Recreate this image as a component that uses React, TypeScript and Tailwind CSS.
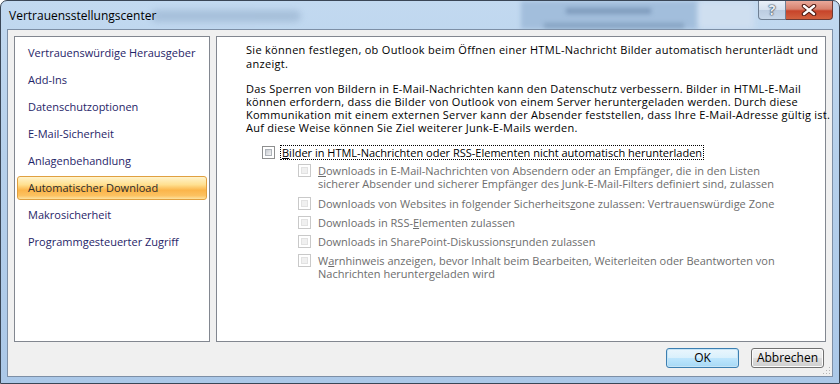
import React from "react";

const nav = [
  "Vertrauenswürdige Herausgeber",
  "Add-Ins",
  "Datenschutzoptionen",
  "E-Mail-Sicherheit",
  "Anlagenbehandlung",
  "Automatischer Download",
  "Makrosicherheit",
  "Programmgesteuerter Zugriff",
];

function U({ children }: { children: React.ReactNode }) {
  return <u className="inline-block leading-[13px] h-[13px]">{children}</u>;
}

function Box({ disabled }: { disabled?: boolean }) {
  return disabled ? (
    <div className="w-[13px] h-[13px] shrink-0 border border-[#c9c9c9] bg-white p-[2px]">
      <div className="w-full h-full border border-[#e2e2e2] bg-[#f0f0f0]" />
    </div>
  ) : (
    <div className="w-[13px] h-[13px] shrink-0 border border-[#8e8f8f] bg-white p-[2px]">
      <div className="w-full h-full border border-[#aeb3b9] bg-[linear-gradient(135deg,#c8ccd2,#f4f4f4)]" />
    </div>
  );
}

function Btn({ children, def }: { children: React.ReactNode; def?: boolean }) {
  return (
    <div
      className={
        "w-[73px] h-[20px] rounded-[3px] border flex items-center justify-center text-black " +
        (def
          ? "border-[#3c7fb1] bg-[linear-gradient(to_bottom,#eaf6fd_0%,#d9f0fc_50%,#bee6fd_51%,#a7d9f5_100%)] shadow-[inset_0_0_0_1px_#c6e4f6]"
          : "border-[#707070] bg-[linear-gradient(to_bottom,#f2f2f2_0%,#ebebeb_50%,#dddddd_51%,#cfcfcf_100%)] shadow-[inset_0_0_0_1px_#fcfcfc]")
      }
    >
      {children}
    </div>
  );
}

export default function App() {
  return (
    <div className="w-[840px] h-[384px] relative overflow-hidden rounded-t-[7px] border border-[#3a4656] bg-[linear-gradient(to_bottom,#c2d9f0_0%,#b6d0eb_40%,#abc8e8_100%)] font-['Open_Sans','Noto_Sans',sans-serif] text-[11px]">
      {/* blurred background through glass */}
      <div className="absolute left-[150px] top-[9px] w-[150px] h-[12px] rounded-full bg-[#9cb6d2] blur-[3px] opacity-70" />
      <div className="absolute left-[520px] top-[0px] w-[178px] h-[28px] bg-[#a2bedc] blur-[2px]" />
      <div className="absolute left-[565px] top-[7px] w-[85px] h-[6px] bg-[#7f9cbd] blur-[2px]" />
      <div className="absolute left-[543px] top-[22px] w-[140px] h-[5px] bg-[#86a3c2] blur-[2px]" />
      <div className="absolute left-[697px] top-[0px] w-[56px] h-[28px] bg-[#cfdff0] blur-[3px]" />

      {/* title buttons */}
      <div className="absolute top-0 right-[6px] flex h-[19px]">
        <div className="w-[28px] h-full rounded-bl-[4px] border border-t-0 border-[#6f7f93] bg-[linear-gradient(to_bottom,#e9f0f8_0%,#d5e1ee_50%,#bccce0_51%,#c8d8ea_100%)] flex items-center justify-center">
          <span className="text-[14px] font-bold leading-none text-[#e9eef4] [text-shadow:0_0_1px_#3b4b60,0_0_1px_#3b4b60,0_0_2px_#3b4b60]">?</span>
        </div>
        <div className="w-[47px] h-full rounded-br-[4px] border border-t-0 border-l-0 border-[#6f3a33] bg-[linear-gradient(to_bottom,#e9a99b_0%,#d7826e_45%,#c7442a_55%,#d2613f_100%)] flex items-center justify-center">
          <svg width="16" height="12" viewBox="0 0 16 12">
            <path d="M3 2 L13 10 M13 2 L3 10" stroke="#4d1a12" strokeWidth="4.5" strokeLinecap="round" />
            <path d="M3 2 L13 10 M13 2 L3 10" stroke="#ffffff" strokeWidth="2.4" strokeLinecap="round" />
          </svg>
        </div>
      </div>

      {/* title bar */}
      <div className="relative h-[28px] flex items-center pl-[8px] pt-[1px] text-[12px] text-black">
        Vertrauensstellungscenter
      </div>

      {/* client area */}
      <div className="relative mx-[6px] h-[348px] border border-[#7d8fa6] bg-[#f0f0f0] pt-[6px] px-[6px]">
        <div className="flex gap-[6px] h-[306px]">
          {/* left nav */}
          <div className="w-[196px] h-full bg-white border border-[#828790] pt-[4px] px-[2px] flex flex-col gap-[3px]">
            {nav.map((n, i) =>
              i === 5 ? (
                <div
                  key={n}
                  className="h-[24px] shrink-0 rounded-[3px] border border-[#e0a040] bg-[linear-gradient(to_bottom,#fff3cc_0%,#ffe090_35%,#fbb54a_60%,#fcc262_85%,#fde3a0_100%)] flex items-center pl-[10px] text-[#2a2a2a]"
                >
                  {n}
                </div>
              ) : (
                <div key={n} className="h-[24px] shrink-0 flex items-center pl-[11px] text-[#1f2568]">
                  {n}
                </div>
              )
            )}
          </div>

          {/* right content */}
          <div className="w-[610px] h-full bg-white border border-[#828790] pl-[29px] pt-[6px] text-black whitespace-nowrap">
            <div className="leading-[14px] tracking-[0.3px]">
              <div>Sie können festlegen, ob Outlook beim Öffnen einer HTML-Nachricht Bilder automatisch herunterlädt und</div>
              <div>anzeigt.</div>
            </div>
            <div className="mt-[11px] leading-[13px] tracking-[0.25px]">
              <div>Das Sperren von Bildern in E-Mail-Nachrichten kann den Datenschutz verbessern. Bilder in HTML-E-Mail</div>
              <div>können erfordern, dass die Bilder von Outlook von einem Server heruntergeladen werden. Durch diese</div>
              <div>Kommunikation mit einem externen Server kann der Absender feststellen, dass Ihre E-Mail-Adresse gültig ist.</div>
              <div>Auf diese Weise können Sie Ziel weiterer Junk-E-Mails werden.</div>
            </div>

            <div className="mt-[11px] ml-[16px] flex items-center h-[15px]">
              <Box />
              <div className="ml-[5px] h-[15px] border border-dotted border-black px-[1px] leading-[13px]">
                <U>B</U>ilder in HTML-Nachrichten oder RSS-Elementen nicht automatisch herunterladen
              </div>
            </div>

            <div className="ml-[52px] mt-[4px] flex flex-col text-[#6d6d6d] leading-[13px]">
              <div className="flex items-start">
                <Box disabled />
                <div className="ml-[7px]">
                  <div><U>D</U>ownloads in E-Mail-Nachrichten von Absendern oder an Empfänger, die in den Listen</div>
                  <div>sicherer Absender und sicherer Empfänger des Junk-E-Mail-Filters definiert sind, zulassen</div>
                </div>
              </div>
              <div className="flex items-start mt-[7px]">
                <Box disabled />
                <div className="ml-[7px]">Downloads von Websites in folgender Sicherheits<U>z</U>one zulassen: Vertrauenswürdige Zone</div>
              </div>
              <div className="flex items-start mt-[6px]">
                <Box disabled />
                <div className="ml-[7px]">Downloads in RSS-<U>E</U>lementen zulassen</div>
              </div>
              <div className="flex items-start mt-[6px]">
                <Box disabled />
                <div className="ml-[7px]">Downloads in SharePoint-Diskussions<U>r</U>unden zulassen</div>
              </div>
              <div className="flex items-start mt-[6px]">
                <Box disabled />
                <div className="ml-[7px]">
                  <div>W<U>a</U>rnhinweis anzeigen, bevor Inhalt beim Bearbeiten, Weiterleiten oder Beantworten von</div>
                  <div>Nachrichten heruntergeladen wird</div>
                </div>
              </div>
            </div>
          </div>
        </div>

        {/* buttons */}
        <div className="mt-[6px] flex justify-end gap-[12px] pr-[2px] text-[12px]">
          <Btn def>OK</Btn>
          <Btn>Abbrechen</Btn>
        </div>

        {/* resize grip */}
        <svg className="absolute right-[1px] bottom-[1px]" width="8" height="8" viewBox="0 0 8 8">
          <rect x="6" y="0" width="1" height="1" fill="#b5b5b5" />
          <rect x="3" y="3" width="1" height="1" fill="#b5b5b5" />
          <rect x="6" y="3" width="1" height="1" fill="#b5b5b5" />
          <rect x="0" y="6" width="1" height="1" fill="#b5b5b5" />
          <rect x="3" y="6" width="1" height="1" fill="#b5b5b5" />
          <rect x="6" y="6" width="1" height="1" fill="#b5b5b5" />
        </svg>
      </div>
    </div>
  );
}
